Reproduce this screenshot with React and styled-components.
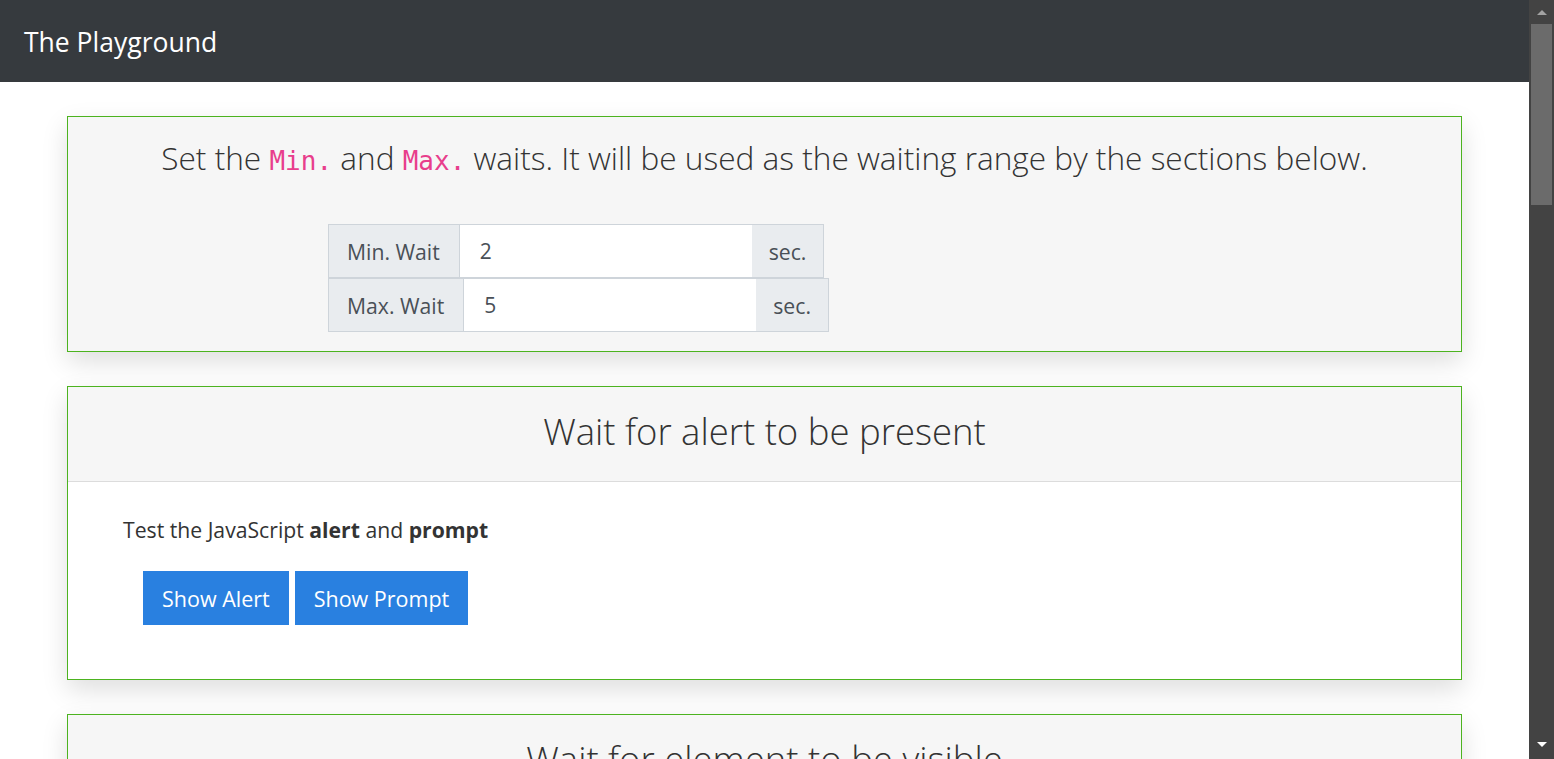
import React from "react";
import styled, { createGlobalStyle } from "styled-components";

const GlobalStyle = createGlobalStyle`
  html, body {
    margin: 0;
    padding: 0;
    height: 100%;
    overflow: hidden;
    background: #fff;
    font-family: "Open Sans", "Noto Sans", sans-serif;
    color: #333;
  }
`;

export default function App() {
  return (
    <Shell>
      <GlobalStyle />
      <ScrollArea>
        <NavBar>
          <Brand>The Playground</Brand>
        </NavBar>
        <Container>
          <Card>
            <Lead>
              Set the <Code>Min.</Code> and <Code>Max.</Code> waits. It will be used as the waiting range by the sections below.
            </Lead>
            <Groups>
              <InputGroup>
                <Addon>Min. Wait</Addon>
                <Field defaultValue="2" />
                <Addon $unit>sec.</Addon>
              </InputGroup>
              <InputGroup>
                <Addon>Max. Wait</Addon>
                <Field defaultValue="5" />
                <Addon $unit>sec.</Addon>
              </InputGroup>
            </Groups>
          </Card>

          <Card>
            <CardHeader>Wait for alert to be present</CardHeader>
            <CardBody>
              <Text>
                Test the JavaScript <b>alert</b> and <b>prompt</b>
              </Text>
              <ButtonRow>
                <Button>Show Alert</Button>
                <Button>Show Prompt</Button>
              </ButtonRow>
            </CardBody>
          </Card>

          <Card>
            <CardHeader>Wait for element to be visible</CardHeader>
            <CardBody $empty />
          </Card>
        </Container>
      </ScrollArea>
      <Rail>
        <Arrow $dir="up" />
        <Thumb />
        <Arrow $dir="down" />
      </Rail>
    </Shell>
  );
}

const Shell = styled.div`
  display: flex;
  height: 100vh;
`;

const ScrollArea = styled.div`
  flex: 1;
  min-width: 0;
  overflow: hidden;
`;

const Rail = styled.div`
  width: 25px;
  flex-shrink: 0;
  background: #434343;
  display: flex;
  flex-direction: column;
  align-items: center;
  padding: 10px 0 12px;
  box-sizing: border-box;
`;

const Arrow = styled.span`
  width: 0;
  height: 0;
  border-left: 5px solid transparent;
  border-right: 5px solid transparent;
  ${(p) =>
    p.$dir === "up"
      ? "border-bottom: 5px solid #a3a3a3;"
      : "border-top: 5px solid #fff; margin-top: auto;"}
`;

const Thumb = styled.div`
  align-self: stretch;
  margin: 9px 2px 0;
  height: 181px;
  background: #6b6b6b;
`;

const NavBar = styled.nav`
  height: 82px;
  background: #363a3e;
  display: flex;
  align-items: center;
  padding: 0 24px;
`;

const Brand = styled.a`
  color: #fff;
  font-size: 26.5px;
  line-height: 1;
  margin-top: 2px;
`;

const Container = styled.main`
  width: 1395px;
  margin: 0 auto;
  padding: 34px 0 40px;
  display: flex;
  flex-direction: column;
  gap: 34px;
`;

const Card = styled.section`
  border: 1px solid #4cb31f;
  background: #f6f6f6;
  box-shadow: 0 10px 24px rgba(0, 0, 0, 0.13);
`;

const Lead = styled.h3`
  margin: 0;
  padding: 21px 20px 0;
  text-align: center;
  font-size: 31.6px;
  font-weight: 300;
  line-height: 39px;
  color: #333;
`;

const Code = styled.code`
  font-family: "DejaVu Sans Mono", "Liberation Mono", monospace;
  font-size: 26px;
  color: #e83e8c;
`;

const Groups = styled.div`
  margin: 43px 0 19px 260px;
  display: flex;
  flex-direction: column;
  align-items: flex-start;
`;

const InputGroup = styled.div`
  display: inline-flex;
  height: 54px;
`;

const Addon = styled.span`
  display: flex;
  align-items: center;
  padding: ${(p) => (p.$unit ? "0 17px" : "0 19px 0 18px")};
  background: #e9ecef;
  border: 1px solid #ced4da;
  font-size: 21.2px;
  color: #495057;
  &:last-child {
    border-left: 0;
  }
`;

const Field = styled.input`
  width: 292px;
  box-sizing: border-box;
  border: 1px solid #ced4da;
  border-left: 0;
  border-right: 0;
  padding: 0 18px 0 20px;
  font-family: inherit;
  font-size: 21px;
  color: #495057;
  background: #fff;
  outline: none;
`;

const CardHeader = styled.h2`
  margin: 0;
  height: 95px;
  box-sizing: border-box;
  padding-bottom: 6px;
  border-bottom: 1px solid #dcdcdc;
  display: flex;
  align-items: center;
  justify-content: center;
  font-size: 36.5px;
  font-weight: 300;
  color: #333;
`;

const CardBody = styled.div`
  background: #fff;
  padding: 34px 55px 54px;
  min-height: ${(p) => (p.$empty ? "150px" : "auto")};
`;

const Text = styled.p`
  margin: 0;
  font-size: 21.2px;
  line-height: 28px;
  color: #333;
  b {
    font-weight: 700;
  }
`;

const ButtonRow = styled.div`
  display: flex;
  gap: 6px;
  margin: 27px 0 0 20px;
`;

const Button = styled.button`
  height: 54px;
  padding: 0 19px;
  border: 0;
  border-radius: 0;
  background: #2980e0;
  color: #fff;
  font-family: inherit;
  font-size: 21.5px;
  cursor: pointer;
`;
